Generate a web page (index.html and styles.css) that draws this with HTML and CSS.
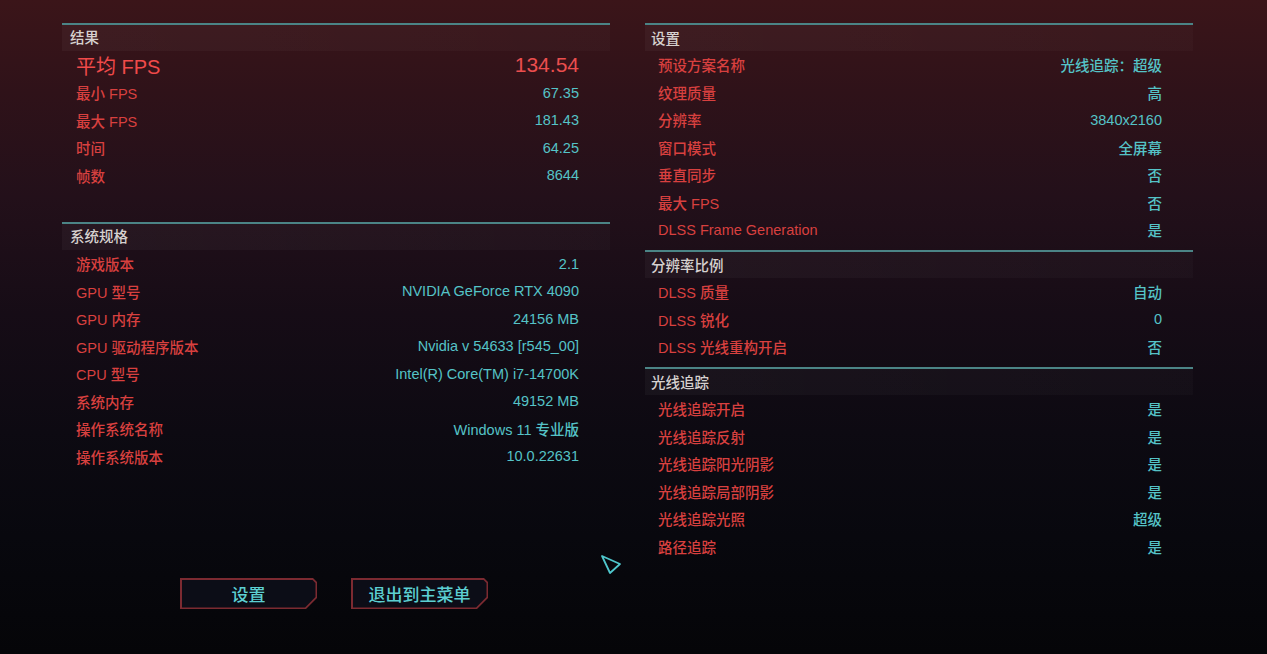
FILE: index.html
```html
<!DOCTYPE html>
<html lang="zh-CN">
<head>
<meta charset="utf-8">
<title>基准测试结果</title>
<link rel="stylesheet" href="styles.css">
</head>
<body>
<div class="screen">
  <div class="col col-left">
    <section class="sec sec-results">
      <div class="sec-head">结果</div>
      <div class="row row-main"><span class="lbl">平均 FPS</span><span class="val">134.54</span></div>
      <div class="row"><span class="lbl">最小 FPS</span><span class="val">67.35</span></div>
      <div class="row"><span class="lbl">最大 FPS</span><span class="val">181.43</span></div>
      <div class="row"><span class="lbl">时间</span><span class="val">64.25</span></div>
      <div class="row"><span class="lbl">帧数</span><span class="val">8644</span></div>
    </section>
    <section class="sec sec-system">
      <div class="sec-head">系统规格</div>
      <div class="row"><span class="lbl">游戏版本</span><span class="val">2.1</span></div>
      <div class="row"><span class="lbl">GPU 型号</span><span class="val">NVIDIA GeForce RTX 4090</span></div>
      <div class="row"><span class="lbl">GPU 内存</span><span class="val">24156 MB</span></div>
      <div class="row"><span class="lbl">GPU 驱动程序版本</span><span class="val">Nvidia v 54633 [r545_00]</span></div>
      <div class="row"><span class="lbl">CPU 型号</span><span class="val">Intel(R) Core(TM) i7-14700K</span></div>
      <div class="row"><span class="lbl">系统内存</span><span class="val">49152 MB</span></div>
      <div class="row"><span class="lbl">操作系统名称</span><span class="val">Windows 11 专业版</span></div>
      <div class="row"><span class="lbl">操作系统版本</span><span class="val">10.0.22631</span></div>
    </section>
    <div class="buttons">
      <div class="btn"><div class="btn-inner">设置</div></div>
      <div class="btn"><div class="btn-inner">退出到主菜单</div></div>
    </div>
  </div>
  <div class="col col-right">
    <section class="sec">
      <div class="sec-head">设置</div>
      <div class="row"><span class="lbl">预设方案名称</span><span class="val">光线追踪：超级</span></div>
      <div class="row"><span class="lbl">纹理质量</span><span class="val">高</span></div>
      <div class="row"><span class="lbl">分辨率</span><span class="val">3840x2160</span></div>
      <div class="row"><span class="lbl">窗口模式</span><span class="val">全屏幕</span></div>
      <div class="row"><span class="lbl">垂直同步</span><span class="val">否</span></div>
      <div class="row"><span class="lbl">最大 FPS</span><span class="val">否</span></div>
      <div class="row"><span class="lbl">DLSS Frame Generation</span><span class="val">是</span></div>
    </section>
    <section class="sec">
      <div class="sec-head">分辨率比例</div>
      <div class="row"><span class="lbl">DLSS 质量</span><span class="val">自动</span></div>
      <div class="row"><span class="lbl">DLSS 锐化</span><span class="val">0</span></div>
      <div class="row"><span class="lbl">DLSS 光线重构开启</span><span class="val">否</span></div>
    </section>
    <section class="sec">
      <div class="sec-head">光线追踪</div>
      <div class="row"><span class="lbl">光线追踪开启</span><span class="val">是</span></div>
      <div class="row"><span class="lbl">光线追踪反射</span><span class="val">是</span></div>
      <div class="row"><span class="lbl">光线追踪阳光阴影</span><span class="val">是</span></div>
      <div class="row"><span class="lbl">光线追踪局部阴影</span><span class="val">是</span></div>
      <div class="row"><span class="lbl">光线追踪光照</span><span class="val">超级</span></div>
      <div class="row"><span class="lbl">路径追踪</span><span class="val">是</span></div>
    </section>
  </div>
  <svg class="cursor" width="24" height="24" viewBox="0 0 24 24">
    <polygon points="3,3 21,11 11,20" fill="none" stroke="#4fc6cc" stroke-width="1.8" stroke-linejoin="round"/>
  </svg>
</div>
</body>
</html>
```

FILE: styles.css
```css
html, body {
  margin: 0;
  padding: 0;
}
body {
  width: 1267px;
  height: 654px;
  overflow: hidden;
  background: linear-gradient(180deg, #3b1519 0%, #2f1219 14%, #23101a 30%, #160c16 48%, #0d0a12 66%, #08080e 82%, #050508 100%);
  font-family: "Liberation Sans", "Noto Sans CJK SC", sans-serif;
  font-size: 14.5px;
}
.screen {
  position: relative;
  display: flex;
  padding: 23px 0 0 62px;
  gap: 35px;
  height: 631px;
}
.col {
  width: 548px;
  display: flex;
  flex-direction: column;
}
.sec {
  border-top: 2px solid #4b8486;
}
.sec-head {
  height: 26px;
  line-height: 26px;
  padding-left: 8px;
  color: #d6d1cf;
  font-size: 14.5px;
  font-weight: 500;
  background: linear-gradient(90deg, rgba(255,255,255,0.035), rgba(255,255,255,0.02));
}
.col-right .sec-head {
  padding-left: 6px;
  line-height: 29px;
}
.row {
  height: 27.5px;
  display: flex;
  align-items: center;
  justify-content: space-between;
  padding: 0 31px 0 14px;
}
.col-right .row {
  padding-left: 13px;
}
.lbl {
  color: #d8403f;
  font-weight: 500;
}
.val {
  color: #55c3c7;
  font-weight: 500;
}
.row-main {
  height: 28px;
}
.row-main .lbl {
  color: #f04a4a;
  font-size: 20px;
  font-weight: 400;
}
.row-main .val {
  color: #ea4e4e;
  font-size: 21px;
  font-weight: 400;
}
.sec-results {
  padding-bottom: 33px;
}
.col-right .sec + .sec {
  margin-top: 6.5px;
}
.buttons {
  display: flex;
  justify-content: center;
  gap: 34px;
  margin-top: 108px;
  padding-right: 4px;
}
.btn {
  width: 137px;
  height: 31px;
  padding: 1.5px;
  box-sizing: border-box;
  background: #7c2a31;
  clip-path: polygon(0 0, calc(100% - 4px) 0, 100% 4px, 100% calc(100% - 11px), calc(100% - 11px) 100%, 0 100%);
}
.btn-inner {
  height: 100%;
  background: #0c0d17;
  clip-path: polygon(0 0, calc(100% - 3.4px) 0, 100% 3.4px, 100% calc(100% - 10.4px), calc(100% - 10.4px) 100%, 0 100%);
  display: flex;
  align-items: center;
  justify-content: center;
  color: #5ccfd2;
  font-size: 17px;
  font-weight: 500;
  font-family: "Noto Sans CJK SC", sans-serif;
}
.cursor {
  position: absolute;
  left: 599px;
  top: 553px;
}
```
